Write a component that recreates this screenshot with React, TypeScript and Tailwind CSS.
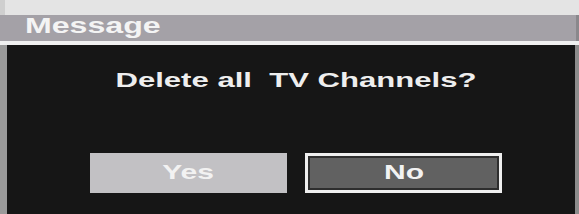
import React from "react";

export default function App() {
  const font = { fontFamily: '"Liberation Sans", Arial, sans-serif' };
  return (
    <div className="w-[579px] h-[214px] flex flex-col overflow-hidden bg-[#171717]" style={font}>
      <div className="h-[15px] bg-[#e4e4e4] border-l-[5px] border-[#cfcfcf]" />
      <div className="h-[26px] bg-[#a4a1a7] border-r-[3px] border-[#8a888c] pl-[25px] pt-[1px]">
        <span className="inline-block origin-left scale-x-[1.46] text-[22px] leading-[16px] font-bold text-[#f4f4f4]">
          Message
        </span>
      </div>
      <div className="h-[4px] bg-[#f0f0f0]" />
      <div className="flex-1 flex flex-col items-center bg-[#161616] border-l-[7px] border-l-[#9a9a9a] border-r-[4px] border-r-[#8c8c8c] pl-[10px] pt-[23px]">
        <div className="text-[21px] leading-[24px] font-bold text-[#eeeeee] scale-x-[1.48] whitespace-pre">
          {"Delete all  TV Channels?"}
        </div>
        <div className="mt-[61px] flex gap-[18px]">
          <div className="w-[197px] h-[40px] bg-[#c2c1c4] flex items-center justify-center">
            <span className="inline-block scale-x-[1.43] text-[21px] leading-none font-bold text-[#f2f2f2] -mt-[4px]">
              Yes
            </span>
          </div>
          <div className="w-[197px] h-[40px] border-[3px] border-[#efefef] bg-[#2e2e2e] p-[2px]">
            <div className="w-full h-full bg-[#616161] flex items-center justify-center">
              <span className="inline-block scale-x-[1.43] text-[21px] leading-none font-bold text-[#f2f2f2] -mt-[4px]">
                No
              </span>
            </div>
          </div>
        </div>
      </div>
    </div>
  );
}
